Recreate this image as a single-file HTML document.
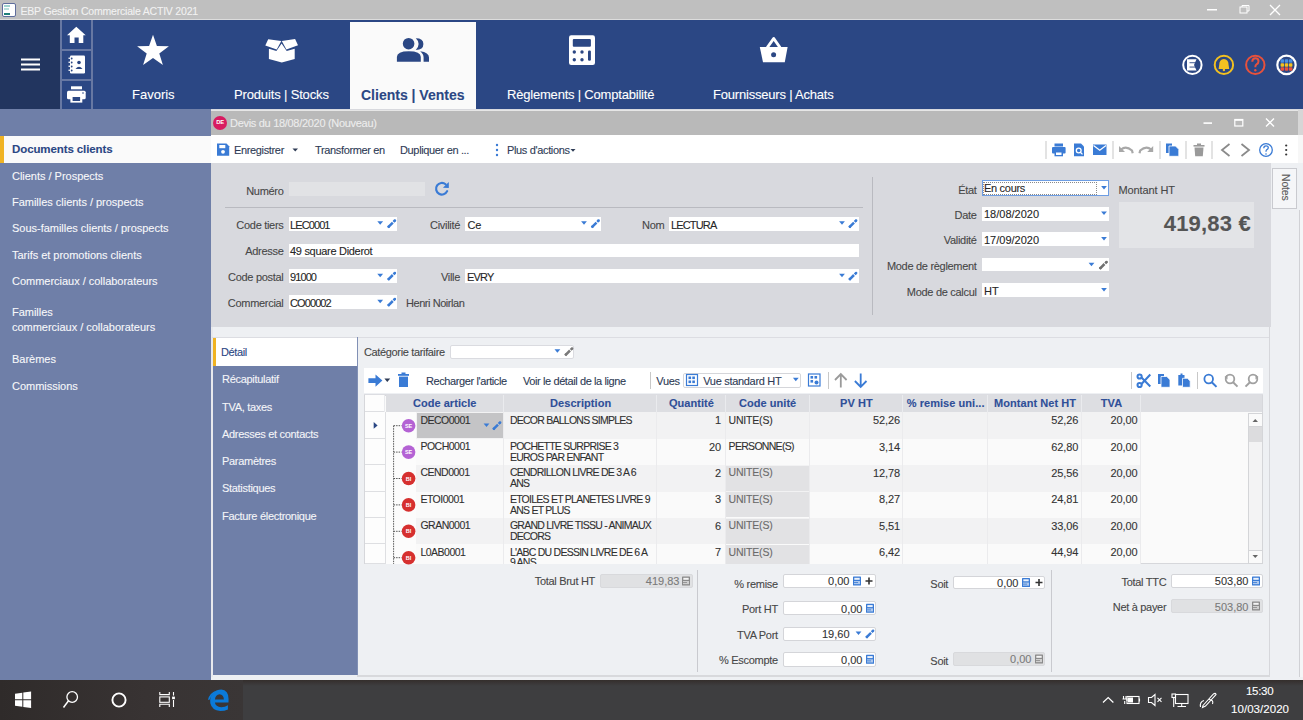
<!DOCTYPE html>
<html><head><meta charset="utf-8">
<style>
*{margin:0;padding:0;box-sizing:border-box}
html,body{width:1303px;height:720px;overflow:hidden;background:#d8d9de;font-family:"Liberation Sans",sans-serif}
.a{position:absolute}
.t{position:absolute;white-space:nowrap;line-height:1;-webkit-text-stroke:0.1px currentColor}
.lbl{position:absolute;white-space:nowrap;line-height:14px;font-size:11px;color:#454545;text-align:right;letter-spacing:-0.25px}
.inp{position:absolute;background:#fff;height:14px}
.inp span{position:absolute;left:2px;top:1px;font-size:11px;line-height:12px;color:#222;white-space:nowrap;letter-spacing:-0.2px}
svg{position:absolute;overflow:visible}
</style></head>
<body>
<!-- window title bar -->
<div class="a" style="left:0;top:0;width:1303px;height:19px;background:#bfbfbf"></div>
<div class="a" style="left:0;top:19px;width:1303px;height:1px;background:#dcdcdc"></div>
<div class="t" style="left:20.5px;top:5.5px;font-size:10.5px;color:#f2f2f2;letter-spacing:-0.2px">EBP Gestion Commerciale ACTIV 2021</div>


<div class="a" style="left:2px;top:3px;width:14px;height:14px;border:1.5px solid #5f6d9c;border-radius:2px;background:#fff"></div>
<div class="a" style="left:4px;top:5px;width:6px;height:2px;background:#9fd3cf"></div>
<div class="a" style="left:4px;top:8px;width:5px;height:2px;background:#b8e0dc"></div>
<div class="a" style="left:4px;top:13px;width:6px;height:2px;background:#1f7f7a"></div>

<!-- nav bar -->
<div class="a" style="left:0;top:20px;width:1303px;height:89px;background:#2b4784"></div>
<div class="a" style="left:0;top:20px;width:60px;height:89px;background:#22355f"></div>
<div class="a" style="left:60px;top:20px;width:2px;height:89px;background:#6778a3"></div>
<div class="a" style="left:91px;top:20px;width:2px;height:89px;background:#6778a3"></div>
<div class="a" style="left:62px;top:49px;width:29px;height:2px;background:#6778a3"></div>
<div class="a" style="left:62px;top:79px;width:29px;height:2px;background:#6778a3"></div>

<!-- active tab -->
<div class="a" style="left:350px;top:22px;width:126px;height:87px;background:#fafafa"></div>
<div class="t" style="left:132px;top:88px;font-size:13px;color:#fff">Favoris</div>
<div class="t" style="left:234px;top:88px;font-size:13px;color:#fff;letter-spacing:-0.15px">Produits | Stocks</div>
<div class="t" style="left:361px;top:88px;font-size:14px;font-weight:bold;color:#2b4784">Clients | Ventes</div>
<div class="t" style="left:507px;top:88px;font-size:13px;color:#fff;letter-spacing:-0.2px">Règlements | Comptabilité</div>
<div class="t" style="left:713px;top:88px;font-size:13px;color:#fff;letter-spacing:-0.2px">Fournisseurs | Achats</div>


<!-- nav icons -->
<svg width="1303" height="720" style="left:0;top:0" viewBox="0 0 1303 720">
<rect x="21" y="58.5" width="19" height="2" fill="#fff"/>
<rect x="21" y="63.5" width="19" height="2" fill="#fff"/>
<rect x="21" y="68.5" width="19" height="2" fill="#fff"/>
<path d="M76.3 26.8 L67 35.3 L69.8 35.3 L69.8 43 L74.5 43 L74.5 37.5 L78.7 37.5 L78.7 43 L83.3 43 L83.3 35.3 L85.7 35.3 Z" fill="#fff"/>
<rect x="70" y="55.5" width="15" height="18" rx="1.2" fill="#fff"/>
<g fill="#2b4784"><circle cx="71.6" cy="58.5" r="1"/><circle cx="71.6" cy="62.5" r="1"/><circle cx="71.6" cy="66.5" r="1"/><circle cx="71.6" cy="70.5" r="1"/>
<circle cx="79" cy="62.5" r="1.8"/><path d="M75.5 69 Q79 64.5 82.5 69 Z"/></g>
<g fill="#fff"><rect x="68.5" y="57.6" width="2.2" height="1.3"/><rect x="68.5" y="61.6" width="2.2" height="1.3"/><rect x="68.5" y="65.6" width="2.2" height="1.3"/><rect x="68.5" y="69.6" width="2.2" height="1.3"/></g>
<rect x="71" y="86.3" width="11" height="3" fill="#fff"/>
<rect x="67" y="90.7" width="18.7" height="8.5" rx="1.5" fill="#fff"/>
<rect x="70.4" y="95" width="11.9" height="7.6" fill="#fff"/>
<rect x="72.6" y="97" width="7.5" height="4" fill="#2b4784"/>
<circle cx="83" cy="93" r="0.8" fill="#2b4784"/>
<path d="M153 34.7 L156.9 46.1 L168.9 46.3 L159.3 53.5 L162.9 65 L153 58.1 L143.1 65 L146.7 53.5 L137.1 46.3 L149.1 46.1 Z" fill="#fff"/>
<path d="M268.2 39.3 L281.3 41.1 L276.7 49.6 L265.3 45.6 Z M281.8 41.1 L295.1 39.1 L298 45.3 L286.4 49.6 Z M268.9 48.7 L276.4 50.9 L281.6 43.6 L286.7 50.9 L294.7 48.7 L294.7 58.9 L281.8 62.4 L268.9 58.9 Z" fill="#fff"/>
<circle cx="408.6" cy="43.7" r="5.8" fill="#2b4784"/>
<path d="M396.9 61.8 L396.9 57 Q397 51.3 408.8 51.3 Q420.7 51.3 420.8 57 L420.8 61.8 Z" fill="#2b4784"/>
<path d="M415.8 38.3 Q423.4 38.3 423.4 44 Q423.4 49.9 415.8 49.9 Q418.6 47.2 418.6 44 Q418.6 40.8 415.8 38.3 Z" fill="#2b4784"/>
<path d="M420.2 51.3 Q429 52.5 429 57.5 L429 61.8 L423.6 61.8 L423.6 57.5 Q423.6 54 420.2 51.3 Z" fill="#2b4784"/>
<rect x="569" y="35.3" width="26" height="29.7" rx="2.2" fill="#fff"/>
<rect x="572.8" y="39" width="18.1" height="7.7" rx="1" fill="#2b4784"/>
<g fill="#2b4784"><circle cx="574.3" cy="52" r="1.7"/><circle cx="582" cy="52" r="1.7"/><circle cx="574.3" cy="59.8" r="1.7"/><circle cx="582" cy="59.8" r="1.7"/><rect x="588" y="50.4" width="2.9" height="10.3" rx="1.2"/></g>
<path d="M759.8 47 L787.6 47 L784.8 62.2 L763 62.2 Z" fill="#fff"/>
<path d="M767.3 47.5 L773.7 38.5 L780 47.5" fill="none" stroke="#fff" stroke-width="3" stroke-linejoin="round"/>
<circle cx="773.6" cy="54.7" r="2.5" fill="#2b4784"/>
<!-- right header icons -->
<circle cx="1192.4" cy="64.9" r="9.2" fill="none" stroke="#fff" stroke-width="2"/>
<path d="M1187 59.2 L1196.5 59.2 L1194 64.9 L1196.5 70.6 L1187 70.6 Z" fill="#fff"/><g fill="#2b4784"><rect x="1189.5" y="62.3" width="6" height="0.9"/><rect x="1189.5" y="66.6" width="6" height="0.9"/></g>
<circle cx="1223.9" cy="64.9" r="9.2" fill="none" stroke="#f3c120" stroke-width="2"/>
<path d="M1223.9 59 Q1219.2 59.5 1219.2 65 L1218.6 69 L1229.2 69 L1228.6 65 Q1228.6 59.5 1223.9 59 Z" fill="#f3c120"/>
<circle cx="1223.9" cy="70" r="1.2" fill="#f3c120"/>
<circle cx="1255.3" cy="64.9" r="9.2" fill="none" stroke="#e8513c" stroke-width="2"/>
<path d="M1252.3 61.8 Q1252.3 58.3 1255.3 58.3 Q1258.5 58.3 1258.5 61.3 Q1258.5 63.3 1256.5 64.3 Q1255.3 65 1255.3 67.3" fill="none" stroke="#e8513c" stroke-width="2"/><circle cx="1255.3" cy="70.2" r="1.2" fill="#e8513c"/>
<circle cx="1286.5" cy="64.9" r="9.2" fill="none" stroke="#fff" stroke-width="2.2"/>
<rect x="1280.6" y="59.3" width="3.4" height="3.4" rx="0.8" fill="#4a90e2"/><rect x="1284.8" y="59.3" width="3.4" height="3.4" rx="0.8" fill="#4a90e2"/><rect x="1289.0" y="59.3" width="3.4" height="3.4" rx="0.8" fill="#4a90e2"/><rect x="1280.6" y="63.3" width="3.4" height="3.4" rx="0.8" fill="#f3c120"/><rect x="1284.8" y="63.3" width="3.4" height="3.4" rx="0.8" fill="#f3c120"/><rect x="1289.0" y="63.3" width="3.4" height="3.4" rx="0.8" fill="#f3c120"/><rect x="1280.6" y="67.3" width="3.4" height="3.4" rx="0.8" fill="#e8513c"/><rect x="1284.8" y="67.3" width="3.4" height="3.4" rx="0.8" fill="#e8513c"/><rect x="1289.0" y="67.3" width="3.4" height="3.4" rx="0.8" fill="#e8513c"/>
<!-- title bar window controls -->
<rect x="1207" y="9" width="10" height="1.5" fill="#fff"/>
<rect x="1240" y="7" width="7" height="6" fill="none" stroke="#fff" stroke-width="1"/>
<path d="M1242 7 L1242 5.5 L1249 5.5 L1249 11 L1247 11" fill="none" stroke="#fff" stroke-width="1"/>
<path d="M1270 5 L1280 15 M1280 5 L1270 15" stroke="#fff" stroke-width="1.3"/>
</svg>

<!-- sidebar -->
<div class="a" style="left:0;top:109px;width:211px;height:571px;background:#6f7fa8"></div>
<div class="a" style="left:0;top:136px;width:211px;height:27px;background:#fafafa"></div>
<div class="a" style="left:0;top:136px;width:4px;height:27px;background:#f0b323"></div>


<div class="t" style="left:12px;top:144px;font-size:11.5px;font-weight:bold;color:#2b4784;letter-spacing:-0.1px">Documents clients</div>
<div style="position:absolute;left:12px;top:1px;font-size:11px;color:#f7f8fa;line-height:1;white-space:nowrap;letter-spacing:-0.02px">
<div class="t" style="top:170px">Clients / Prospects</div>
<div class="t" style="top:196px">Familles clients / prospects</div>
<div class="t" style="top:222px">Sous-familles clients / prospects</div>
<div class="t" style="top:249px">Tarifs et promotions clients</div>
<div class="t" style="top:275px">Commerciaux / collaborateurs</div>
<div class="t" style="top:306px">Familles</div>
<div class="t" style="top:321px">commerciaux / collaborateurs</div>
<div class="t" style="top:353px">Barèmes</div>
<div class="t" style="top:380px">Commissions</div>
</div>

<!-- document window -->
<div class="a" style="left:211px;top:110px;width:1092px;height:570px;background:#eef0f3"></div>
<div class="a" style="left:211px;top:110px;width:1087px;height:25px;background:#b9b9b9"></div>
<div class="a" style="left:211px;top:135px;width:1087px;height:28px;background:#fff"></div>
<div class="a" style="left:211px;top:163px;width:1060px;height:164px;background:#d8d9de"></div>


<!-- doc title -->
<div class="a" style="left:211px;top:110px;width:1087px;height:1px;background:#e6e6e6"></div>
<div class="a" style="left:213px;top:116px;width:14px;height:14px;border-radius:50%;background:#d81b60"></div>
<div class="t" style="left:213px;width:14px;text-align:center;top:120.3px;font-size:5.8px;font-weight:bold;color:#fff;letter-spacing:-0.2px;-webkit-text-stroke:0">DE</div>
<div class="t" style="left:230px;top:117.5px;font-size:11px;color:#ededed;letter-spacing:-0.3px">Devis du 18/08/2020 (Nouveau)</div>
<!-- doc toolbar -->
<div style="position:absolute;left:0;top:0;font-size:11px;color:#2e3b55;line-height:1;white-space:nowrap;letter-spacing:-0.35px">
<div class="t" style="left:234px;top:144.8px">Enregistrer</div>
<div class="t" style="left:315px;top:144.8px">Transformer en</div>
<div class="t" style="left:400px;top:144.8px">Dupliquer en ...</div>
<div class="t" style="left:507px;top:144.8px">Plus d'actions</div>
</div>
<svg width="1303" height="720" style="left:0;top:0" viewBox="0 0 1303 720">
<!-- save icon -->
<path d="M217 143.6 L226.5 143.6 L229.2 146.3 L229.2 155.8 L217 155.8 Z" fill="#3a7bd5"/>
<rect x="219.3" y="145" width="6" height="3.2" fill="#fff"/>
<circle cx="223" cy="151.8" r="1.9" fill="#fff"/>
<path d="M292.5 148.5 L298 148.5 L295.25 151.5 Z" fill="#2e3b55"/>
<g fill="#3a7bd5"><circle cx="497" cy="145" r="1.2"/><circle cx="497" cy="150" r="1.2"/><circle cx="497" cy="155" r="1.2"/></g>
<path d="M570.5 149 L575.5 149 L573 151.8 Z" fill="#2e3b55"/>
<!-- separators -->
<g fill="#c8c8c8"><rect x="1045.5" y="141" width="1" height="18"/><rect x="1112.5" y="141" width="1" height="18"/><rect x="1159.5" y="141" width="1" height="18"/><rect x="1185.5" y="141" width="1" height="18"/><rect x="1211.5" y="141" width="1" height="18"/></g>
<!-- printer -->
<g fill="#3a7bd5"><rect x="1054.5" y="143.5" width="8.5" height="3"/><rect x="1052" y="147" width="13.6" height="6.5" rx="1"/><rect x="1054.5" y="151.5" width="8.5" height="4.8"/></g>
<rect x="1056" y="152.5" width="5.5" height="2.5" fill="#fff"/>
<!-- preview -->
<path d="M1074 143.5 L1081 143.5 L1084 146.5 L1084 156.3 L1074 156.3 Z" fill="#3a7bd5"/>
<circle cx="1078.7" cy="150.5" r="2.4" fill="none" stroke="#fff" stroke-width="1.3"/>
<path d="M1080.4 152.3 L1082.5 154.4" stroke="#fff" stroke-width="1.3"/>
<!-- mail -->
<rect x="1093" y="144.5" width="13.5" height="10.5" fill="#3a7bd5"/>
<path d="M1093.5 145.5 L1099.75 150.3 L1106 145.5" fill="none" stroke="#fff" stroke-width="1.2"/>
<!-- undo redo -->
<path d="M1121 149.5 Q1126 145.3 1132 150.5 L1132.7 153.3" fill="none" stroke="#a8a8a8" stroke-width="2.2"/>
<path d="M1119 146 L1119 152 L1125 152 Z" fill="#a8a8a8"/>
<path d="M1151.2 149.5 Q1146.2 145.3 1140.2 150.5 L1139.5 153.3" fill="none" stroke="#a8a8a8" stroke-width="2.2"/>
<path d="M1153.2 146 L1153.2 152 L1147.2 152 Z" fill="#a8a8a8"/>
<!-- copy doc -->
<path d="M1166 143.5 L1172 143.5 L1172 153 L1166 153 Z" fill="#3a7bd5"/>
<path d="M1169 146 L1175.5 146 L1178.8 149.3 L1178.8 156.3 L1169 156.3 Z" fill="#3a7bd5" stroke="#fff" stroke-width="0.8"/>
<!-- trash -->
<g fill="#9a9a9a"><rect x="1193.5" y="145" width="11" height="1.6"/><rect x="1197" y="143.5" width="4" height="1.5"/><path d="M1194.5 147.5 L1203.5 147.5 L1202.8 156.3 L1195.2 156.3 Z"/></g>
<!-- arrows -->
<path d="M1229.5 144 L1222 150 L1229.5 156" fill="none" stroke="#8a8a8a" stroke-width="1.8"/>
<path d="M1241.5 144 L1249 150 L1241.5 156" fill="none" stroke="#8a8a8a" stroke-width="1.8"/>
<!-- help -->
<circle cx="1266" cy="150" r="6.3" fill="none" stroke="#3a7bd5" stroke-width="1.3"/>
<path d="M1263.8 148.3 Q1263.8 145.8 1266 145.8 Q1268.3 145.8 1268.3 147.8 Q1268.3 149.2 1266.6 149.8 Q1266 150.2 1266 151.8" fill="none" stroke="#3a7bd5" stroke-width="1.3"/>
<circle cx="1266" cy="154" r="0.8" fill="#3a7bd5"/>
<g fill="#333"><circle cx="1286.2" cy="145.5" r="1.1"/><circle cx="1286.2" cy="150" r="1.1"/><circle cx="1286.2" cy="154.5" r="1.1"/></g>
<!-- doc window controls -->
<rect x="1203.5" y="122.3" width="8.5" height="1.6" fill="#fff"/>
<rect x="1234.8" y="119.5" width="8" height="6.5" fill="none" stroke="#fff" stroke-width="1.2"/>
<rect x="1234.8" y="119.5" width="8" height="1.3" fill="#fff"/>
<path d="M1266 118.5 L1274 126.5 M1274 118.5 L1266 126.5" stroke="#fff" stroke-width="1.4"/>
</svg>

<!-- form -->
<div class="t" style="right:1019.5px;top:186.1px;font-size:11px;color:#474747;letter-spacing:-0.3px">Numéro</div>
<div class="a" style="left:288.5px;top:182px;width:136.0px;height:14px;background:#e1e2e5;"></div>
<div class="a" style="left:224.5px;top:207px;width:638.5px;height:1px;background:#b9bac0;"></div>
<div class="t" style="right:1019.5px;top:220.1px;font-size:11px;color:#474747;letter-spacing:-0.3px">Code tiers</div>
<div class="a" style="left:288.5px;top:217px;width:108.69999999999999px;height:14px;background:#fff;"></div>
<div class="t" style="left:290px;top:220.1px;font-size:11px;color:#262626;letter-spacing:-0.9px;font-weight:normal;">LEC0001</div>
<div class="t" style="right:843px;top:220.1px;font-size:11px;color:#474747;letter-spacing:-0.3px">Civilité</div>
<div class="a" style="left:465px;top:217px;width:136px;height:14px;background:#fff;"></div>
<div class="t" style="left:467.5px;top:220.1px;font-size:11px;color:#262626;letter-spacing:-0.3px;font-weight:normal;">Ce</div>
<div class="t" style="right:638.7px;top:220.1px;font-size:11px;color:#474747;letter-spacing:-0.3px">Nom</div>
<div class="a" style="left:669px;top:217px;width:189.5px;height:14px;background:#fff;"></div>
<div class="t" style="left:671px;top:220.1px;font-size:11px;color:#262626;letter-spacing:-0.85px;font-weight:normal;">LECTURA</div>
<div class="t" style="right:1019.5px;top:246.1px;font-size:11px;color:#474747;letter-spacing:-0.3px">Adresse</div>
<div class="a" style="left:288.5px;top:243.5px;width:570.0px;height:13.5px;background:#fff;"></div>
<div class="t" style="left:290px;top:246.1px;font-size:11px;color:#262626;letter-spacing:-0.3px;font-weight:normal;">49 square Diderot</div>
<div class="t" style="right:1019.5px;top:272.1px;font-size:11px;color:#474747;letter-spacing:-0.3px">Code postal</div>
<div class="a" style="left:288.5px;top:269.4px;width:108.69999999999999px;height:13.600000000000023px;background:#fff;"></div>
<div class="t" style="left:290px;top:272.1px;font-size:11px;color:#262626;letter-spacing:-0.9px;font-weight:normal;">91000</div>
<div class="t" style="right:843px;top:272.1px;font-size:11px;color:#474747;letter-spacing:-0.3px">Ville</div>
<div class="a" style="left:465px;top:269.4px;width:393.5px;height:13.600000000000023px;background:#fff;"></div>
<div class="t" style="left:467px;top:272.1px;font-size:11px;color:#262626;letter-spacing:-0.8px;font-weight:normal;">EVRY</div>
<div class="t" style="right:1019.5px;top:298.1px;font-size:11px;color:#474747;letter-spacing:-0.3px">Commercial</div>
<div class="a" style="left:288.5px;top:295px;width:108.69999999999999px;height:13.5px;background:#fff;"></div>
<div class="t" style="left:290px;top:298.1px;font-size:11px;color:#262626;letter-spacing:-0.9px;font-weight:normal;">CO00002</div>
<div class="t" style="left:406px;top:298.1px;font-size:11px;color:#474747;letter-spacing:-0.45px;font-weight:normal;">Henri Noirlan</div>
<div class="a" style="left:872px;top:177px;width:1px;height:138px;background:#b9bac0;"></div>
<div class="t" style="right:326.4px;top:184.6px;font-size:11px;color:#474747;letter-spacing:-0.3px">État</div>
<div class="a" style="left:981.7px;top:180.4px;width:127.70000000000005px;height:15.199999999999989px;background:#fff;border:1px solid #6d9de3"></div>
<div class="a" style="left:983px;top:182px;width:114px;height:13px;background:transparent;border:1px dotted #8a8a8a"></div>
<div class="t" style="left:984px;top:183.3px;font-size:11px;color:#262626;letter-spacing:-0.3px;font-weight:normal;">En cours</div>
<div class="t" style="right:326.4px;top:209.5px;font-size:11px;color:#474747;letter-spacing:-0.3px">Date</div>
<div class="a" style="left:981.7px;top:207px;width:127.70000000000005px;height:13.5px;background:#fff;"></div>
<div class="t" style="left:984px;top:209.3px;font-size:11px;color:#262626;letter-spacing:0px;font-weight:normal;">18/08/2020</div>
<div class="t" style="right:326.4px;top:235.0px;font-size:11px;color:#474747;letter-spacing:-0.3px">Validité</div>
<div class="a" style="left:981.7px;top:232.3px;width:127.70000000000005px;height:13.699999999999989px;background:#fff;"></div>
<div class="t" style="left:984px;top:234.8px;font-size:11px;color:#262626;letter-spacing:0px;font-weight:normal;">17/09/2020</div>
<div class="t" style="right:326.4px;top:260.6px;font-size:11px;color:#474747;letter-spacing:-0.3px">Mode de règlement</div>
<div class="a" style="left:981.7px;top:257.6px;width:127.70000000000005px;height:13.799999999999955px;background:#fff;"></div>
<div class="t" style="right:326.4px;top:286.5px;font-size:11px;color:#474747;letter-spacing:-0.3px">Mode de calcul</div>
<div class="a" style="left:981.7px;top:283.4px;width:127.70000000000005px;height:13.600000000000023px;background:#fff;"></div>
<div class="t" style="left:984px;top:285.8px;font-size:11px;color:#262626;letter-spacing:0px;font-weight:normal;">HT</div>
<div class="t" style="left:1118.4px;top:184.8px;font-size:11px;color:#474747;letter-spacing:-0.1px;font-weight:normal;">Montant HT</div>
<div class="a" style="left:1119px;top:202.4px;width:134.5px;height:45.19999999999999px;background:#e3e4e7;"></div>
<div class="t" style="right:52px;top:213px;font-size:22px;font-weight:bold;color:#555;letter-spacing:0.2px">419,83 €</div>
<div class="a" style="left:1272.4px;top:168.4px;width:24.59999999999991px;height:40.79999999999998px;background:#f5f6f8;border:1px solid #c9cacf"></div>
<div class="t" style="left:1279px;top:174px;font-size:10.5px;color:#5a5a5a;transform-origin:0 0;transform:translate(12px,0) rotate(90deg);letter-spacing:-0.2px">Notes</div>
<svg width="1303" height="720" style="left:0;top:0" viewBox="0 0 1303 720"><path d="M447.16 191.15 A5.8 5.8 0 1 1 445.6 184.26" fill="none" stroke="#3a7bd5" stroke-width="2.2" stroke-linecap="round"/><path d="M448.8 182 L448.8 188.1 L442.9 187.7 Z" fill="#3a7bd5"/><path d="M377.3 221.3 L383.09999999999997 221.3 L380.2 224.7 Z" fill="#3a7bd5"/><path d="M388.00 227.40 L392.80 222.60 M393.50 221.90 L395.00 220.40" stroke="#3a7bd5" stroke-width="2.5" stroke-linecap="butt"/><circle cx="394.90" cy="220.50" r="1.25" fill="#3a7bd5"/><circle cx="388.70" cy="226.70" r="1.25" fill="#3a7bd5"/><path d="M581.1 221.3 L586.9 221.3 L584 224.7 Z" fill="#3a7bd5"/><path d="M591.70 227.40 L596.50 222.60 M597.20 221.90 L598.70 220.40" stroke="#3a7bd5" stroke-width="2.5" stroke-linecap="butt"/><circle cx="598.60" cy="220.50" r="1.25" fill="#3a7bd5"/><circle cx="592.40" cy="226.70" r="1.25" fill="#3a7bd5"/><path d="M839.1 221.3 L844.9 221.3 L842 224.7 Z" fill="#3a7bd5"/><path d="M849.20 227.40 L854.00 222.60 M854.70 221.90 L856.20 220.40" stroke="#3a7bd5" stroke-width="2.5" stroke-linecap="butt"/><circle cx="856.10" cy="220.50" r="1.25" fill="#3a7bd5"/><circle cx="849.90" cy="226.70" r="1.25" fill="#3a7bd5"/><path d="M377.3 273.8 L383.09999999999997 273.8 L380.2 277.2 Z" fill="#3a7bd5"/><path d="M388.00 279.80 L392.80 275.00 M393.50 274.30 L395.00 272.80" stroke="#3a7bd5" stroke-width="2.5" stroke-linecap="butt"/><circle cx="394.90" cy="272.90" r="1.25" fill="#3a7bd5"/><circle cx="388.70" cy="279.10" r="1.25" fill="#3a7bd5"/><path d="M839.1 273.8 L844.9 273.8 L842 277.2 Z" fill="#3a7bd5"/><path d="M849.20 279.80 L854.00 275.00 M854.70 274.30 L856.20 272.80" stroke="#3a7bd5" stroke-width="2.5" stroke-linecap="butt"/><circle cx="856.10" cy="272.90" r="1.25" fill="#3a7bd5"/><circle cx="849.90" cy="279.10" r="1.25" fill="#3a7bd5"/><path d="M377.3 299.8 L383.09999999999997 299.8 L380.2 303.2 Z" fill="#3a7bd5"/><path d="M388.00 305.80 L392.80 301.00 M393.50 300.30 L395.00 298.80" stroke="#3a7bd5" stroke-width="2.5" stroke-linecap="butt"/><circle cx="394.90" cy="298.90" r="1.25" fill="#3a7bd5"/><circle cx="388.70" cy="305.10" r="1.25" fill="#3a7bd5"/><path d="M1101.1 186.10000000000002 L1106.9 186.10000000000002 L1104 189.5 Z" fill="#3a7bd5"/><path d="M1101.1 211.60000000000002 L1106.9 211.60000000000002 L1104 215.0 Z" fill="#3a7bd5"/><path d="M1101.1 237.10000000000002 L1106.9 237.10000000000002 L1104 240.5 Z" fill="#3a7bd5"/><path d="M1088.6 262.8 L1094.4 262.8 L1091.5 266.2 Z" fill="#3a7bd5"/><path d="M1099.70 268.80 L1104.50 264.00 M1105.20 263.30 L1106.70 261.80" stroke="#707070" stroke-width="2.5" stroke-linecap="butt"/><circle cx="1106.60" cy="261.90" r="1.25" fill="#707070"/><circle cx="1100.40" cy="268.10" r="1.25" fill="#707070"/><path d="M1101.1 288.1 L1106.9 288.1 L1104 291.5 Z" fill="#3a7bd5"/></svg>
<!-- tabs column -->
<div class="a" style="left:211px;top:327px;width:2px;height:350px;background:#e8e9ed"></div>
<div class="a" style="left:213px;top:337px;width:143.5px;height:338px;background:#6f7fa8"></div>
<div class="a" style="left:213px;top:337px;width:143.5px;height:29px;background:#fff"></div>
<div class="a" style="left:213px;top:337px;width:3px;height:29px;background:#f0b323"></div>

<!-- grid -->
<div class="a" style="left:364px;top:368px;width:899px;height:25px;background:#fff"></div>
<div class="a" style="left:364px;top:394px;width:899px;height:170px;background:#fafafa"></div>
<div class="a" style="left:364px;top:394px;width:899px;height:18px;background:#dcdde2"></div>

<div class="a" style="left:1298px;top:110px;width:5px;height:25px;background:#d6d6d6"></div>
<div class="a" style="left:1298px;top:135px;width:5px;height:28px;background:#f7f7f7"></div>
<div class="a" style="left:1298.5px;top:210px;width:1px;height:467px;background:#d0d1d5"></div>
<div class="a" style="left:1299.5px;top:210px;width:3.5px;height:467px;background:#f4f5f7"></div>
<!-- detail -->
<div class="a" style="left:212px;top:336.5px;width:1057px;height:1.0px;background:#dcdde2;"></div>
<div class="a" style="left:356.5px;top:337px;width:1.0px;height:338px;background:#8190b5;"></div>
<div class="t" style="left:221px;top:347.4px;font-size:11px;color:#2b4784;letter-spacing:-0.4px;font-weight:normal;">Détail</div>
<div class="t" style="left:222px;top:374.4px;font-size:11px;color:#f4f5f8;letter-spacing:-0.3px;font-weight:normal;">Récapitulatif</div>
<div class="t" style="left:222px;top:401.9px;font-size:11px;color:#f4f5f8;letter-spacing:-0.3px;font-weight:normal;">TVA, taxes</div>
<div class="t" style="left:222px;top:429.4px;font-size:11px;color:#f4f5f8;letter-spacing:-0.3px;font-weight:normal;">Adresses et contacts</div>
<div class="t" style="left:222px;top:456.4px;font-size:11px;color:#f4f5f8;letter-spacing:-0.3px;font-weight:normal;">Paramètres</div>
<div class="t" style="left:222px;top:483.4px;font-size:11px;color:#f4f5f8;letter-spacing:-0.3px;font-weight:normal;">Statistiques</div>
<div class="t" style="left:222px;top:510.9px;font-size:11px;color:#f4f5f8;letter-spacing:-0.3px;font-weight:normal;">Facture électronique</div>
<div class="t" style="left:364px;top:347.4px;font-size:11px;color:#474747;letter-spacing:-0.35px;font-weight:normal;">Catégorie tarifaire</div>
<div class="a" style="left:450px;top:344.7px;width:124px;height:14.300000000000011px;background:#fff;border:1px solid #dadbe0;border-radius:2px"></div>
<div class="a" style="left:364px;top:368px;width:899px;height:25.30000000000001px;background:#fff;"></div>
<div class="t" style="left:426px;top:375.9px;font-size:11px;color:#2e3b55;letter-spacing:-0.4px;font-weight:normal;">Recharger l'article</div>
<div class="t" style="left:523px;top:375.9px;font-size:11px;color:#2e3b55;letter-spacing:-0.4px;font-weight:normal;">Voir le détail de la ligne</div>
<div class="a" style="left:650px;top:372px;width:1px;height:17px;background:#c8c8c8;"></div>
<div class="t" style="left:656.3px;top:375.9px;font-size:11px;color:#2e3b55;letter-spacing:-0.3px;font-weight:normal;">Vues</div>
<div class="a" style="left:683.4px;top:372.5px;width:118.10000000000002px;height:15.100000000000023px;background:#fff;border:1px solid #d5d6da;border-radius:2px"></div>
<div class="t" style="left:703.2px;top:375.9px;font-size:11px;color:#2e3b55;letter-spacing:-0.3px;font-weight:normal;">Vue standard HT</div>
<div class="a" style="left:827.5px;top:372px;width:1.0px;height:17px;background:#c8c8c8;"></div>
<div class="a" style="left:1130.5px;top:372px;width:1.0px;height:17px;background:#c8c8c8;"></div>
<div class="a" style="left:1197px;top:372px;width:1px;height:17px;background:#c8c8c8;"></div>
<div class="a" style="left:364px;top:394.8px;width:899px;height:169.7px;background:#fafafa;border:1px solid #d6d7db"></div>
<div class="a" style="left:386.4px;top:395px;width:875.6px;height:17.399999999999977px;background:#dddee2;"></div>
<div class="a" style="left:365px;top:395px;width:20.399999999999977px;height:17.399999999999977px;background:#fdfdfd;"></div>
<div class="a" style="left:365px;top:411.4px;width:20.399999999999977px;height:1.0px;background:#dedfe2;"></div>
<div class="a" style="left:384.4px;top:395px;width:1.0px;height:17.399999999999977px;background:#eaebee;"></div>
<div class="a" style="left:503px;top:395px;width:1px;height:17.399999999999977px;background:#eaebee;"></div>
<div class="t" style="left:385.4px;width:118.60000000000002px;top:398.0px;text-align:center;font-size:11px;font-weight:bold;color:#2f4f98;letter-spacing:0.05px">Code article</div>
<div class="a" style="left:656.3px;top:395px;width:1.0px;height:17.399999999999977px;background:#eaebee;"></div>
<div class="t" style="left:504px;width:153.29999999999995px;top:398.0px;text-align:center;font-size:11px;font-weight:bold;color:#2f4f98;letter-spacing:0.05px">Description</div>
<div class="a" style="left:724.7px;top:395px;width:1.0px;height:17.399999999999977px;background:#eaebee;"></div>
<div class="t" style="left:657.3px;width:68.40000000000009px;top:398.0px;text-align:center;font-size:11px;font-weight:bold;color:#2f4f98;letter-spacing:0.05px">Quantité</div>
<div class="a" style="left:808.6px;top:395px;width:1.0px;height:17.399999999999977px;background:#eaebee;"></div>
<div class="t" style="left:725.7px;width:83.89999999999998px;top:398.0px;text-align:center;font-size:11px;font-weight:bold;color:#2f4f98;letter-spacing:0.05px">Code unité</div>
<div class="a" style="left:902.3px;top:395px;width:1.0px;height:17.399999999999977px;background:#eaebee;"></div>
<div class="t" style="left:809.6px;width:93.69999999999993px;top:398.0px;text-align:center;font-size:11px;font-weight:bold;color:#2f4f98;letter-spacing:0.05px">PV HT</div>
<div class="a" style="left:987px;top:395px;width:1px;height:17.399999999999977px;background:#eaebee;"></div>
<div class="t" style="left:903.3px;width:84.70000000000005px;top:398.0px;text-align:center;font-size:11px;font-weight:bold;color:#2f4f98;letter-spacing:0.05px">% remise uni...</div>
<div class="a" style="left:1081px;top:395px;width:1px;height:17.399999999999977px;background:#eaebee;"></div>
<div class="t" style="left:988px;width:94px;top:398.0px;text-align:center;font-size:11px;font-weight:bold;color:#2f4f98;letter-spacing:0.05px">Montant Net HT</div>
<div class="a" style="left:1140px;top:395px;width:1px;height:17.399999999999977px;background:#eaebee;"></div>
<div class="t" style="left:1082px;width:59px;top:398.0px;text-align:center;font-size:11px;font-weight:bold;color:#2f4f98;letter-spacing:0.05px">TVA</div>
<div class="a" style="left:0;top:0;width:1303px;height:564.4px;overflow:hidden"><div class="a" style="left:386.4px;top:412.4px;width:30.0px;height:26.399999999999977px;background:#fcfcfc;"></div>
<div class="a" style="left:416.4px;top:412.4px;width:724.6px;height:26.399999999999977px;background:#f2f2f3;"></div>
<div class="a" style="left:365px;top:412.4px;width:20.399999999999977px;height:26.399999999999977px;background:#fdfdfd;"></div>
<div class="a" style="left:365px;top:437.79999999999995px;width:20.399999999999977px;height:1.0px;background:#dedfe2;"></div>
<div class="a" style="left:385.4px;top:412.4px;width:1.0px;height:26.399999999999977px;background:#dedfe2;"></div>
<div class="a" style="left:503px;top:412.4px;width:1px;height:26.399999999999977px;background:#ebebed;"></div>
<div class="a" style="left:656.3px;top:412.4px;width:1.0px;height:26.399999999999977px;background:#ebebed;"></div>
<div class="a" style="left:724.7px;top:412.4px;width:1.0px;height:26.399999999999977px;background:#ebebed;"></div>
<div class="a" style="left:808.6px;top:412.4px;width:1.0px;height:26.399999999999977px;background:#ebebed;"></div>
<div class="a" style="left:902.3px;top:412.4px;width:1.0px;height:26.399999999999977px;background:#ebebed;"></div>
<div class="a" style="left:987px;top:412.4px;width:1px;height:26.399999999999977px;background:#ebebed;"></div>
<div class="a" style="left:1081px;top:412.4px;width:1px;height:26.399999999999977px;background:#ebebed;"></div>
<div class="a" style="left:1140px;top:412.4px;width:1px;height:26.399999999999977px;background:#ebebed;"></div>
<div class="a" style="left:417.4px;top:413.3px;width:85.60000000000002px;height:24.5px;background:#c4c4c6;"></div>
<div class="t" style="left:420.4px;top:414.6px;font-size:10.5px;color:#303030;letter-spacing:-0.5px;font-weight:normal;">DECO0001</div>
<div class="t" style="left:509.9px;top:414.6px;font-size:10.5px;color:#303030;letter-spacing:-0.75px;font-weight:normal;">DECOR BALLONS SIMPLES</div>
<div class="t" style="right:582px;top:415.1px;font-size:11px;color:#333;letter-spacing:-0.1px">1</div>
<div class="t" style="left:728.6px;top:414.6px;font-size:10.5px;color:#303030;letter-spacing:-0.2px;font-weight:normal;">UNITE(S)</div>
<div class="t" style="right:403px;top:415.1px;font-size:11px;color:#333;letter-spacing:-0.1px">52,26</div>
<div class="t" style="right:224.70000000000005px;top:415.1px;font-size:11px;color:#333;letter-spacing:-0.1px">52,26</div>
<div class="t" style="right:165.5px;top:415.1px;font-size:11px;color:#333;letter-spacing:-0.1px">20,00</div>
<div class="a" style="left:386.4px;top:438.79999999999995px;width:30.0px;height:26.399999999999977px;background:#fcfcfc;"></div>
<div class="a" style="left:416.4px;top:438.79999999999995px;width:724.6px;height:26.399999999999977px;background:#fafafa;"></div>
<div class="a" style="left:365px;top:438.79999999999995px;width:20.399999999999977px;height:26.399999999999977px;background:#fdfdfd;"></div>
<div class="a" style="left:365px;top:464.19999999999993px;width:20.399999999999977px;height:1.0px;background:#dedfe2;"></div>
<div class="a" style="left:385.4px;top:438.79999999999995px;width:1.0px;height:26.399999999999977px;background:#dedfe2;"></div>
<div class="a" style="left:503px;top:438.79999999999995px;width:1px;height:26.399999999999977px;background:#ebebed;"></div>
<div class="a" style="left:656.3px;top:438.79999999999995px;width:1.0px;height:26.399999999999977px;background:#ebebed;"></div>
<div class="a" style="left:724.7px;top:438.79999999999995px;width:1.0px;height:26.399999999999977px;background:#ebebed;"></div>
<div class="a" style="left:808.6px;top:438.79999999999995px;width:1.0px;height:26.399999999999977px;background:#ebebed;"></div>
<div class="a" style="left:902.3px;top:438.79999999999995px;width:1.0px;height:26.399999999999977px;background:#ebebed;"></div>
<div class="a" style="left:987px;top:438.79999999999995px;width:1px;height:26.399999999999977px;background:#ebebed;"></div>
<div class="a" style="left:1081px;top:438.79999999999995px;width:1px;height:26.399999999999977px;background:#ebebed;"></div>
<div class="a" style="left:1140px;top:438.79999999999995px;width:1px;height:26.399999999999977px;background:#ebebed;"></div>
<div class="t" style="left:420.4px;top:441.0px;font-size:10.5px;color:#303030;letter-spacing:-0.5px;font-weight:normal;">POCH0001</div>
<div class="t" style="left:509.9px;top:441.0px;font-size:10.5px;color:#303030;letter-spacing:-0.75px;font-weight:normal;">POCHETTE SURPRISE 3</div>
<div class="t" style="left:509.9px;top:451.8px;font-size:10.5px;color:#303030;letter-spacing:-0.75px;font-weight:normal;">EUROS PAR ENFANT</div>
<div class="t" style="right:582px;top:441.5px;font-size:11px;color:#333;letter-spacing:-0.1px">20</div>
<div class="t" style="left:728.6px;top:441.0px;font-size:10.5px;color:#303030;letter-spacing:-0.7px;font-weight:normal;">PERSONNE(S)</div>
<div class="t" style="right:403px;top:441.5px;font-size:11px;color:#333;letter-spacing:-0.1px">3,14</div>
<div class="t" style="right:224.70000000000005px;top:441.5px;font-size:11px;color:#333;letter-spacing:-0.1px">62,80</div>
<div class="t" style="right:165.5px;top:441.5px;font-size:11px;color:#333;letter-spacing:-0.1px">20,00</div>
<div class="a" style="left:386.4px;top:465.2px;width:30.0px;height:26.399999999999977px;background:#fcfcfc;"></div>
<div class="a" style="left:416.4px;top:465.2px;width:724.6px;height:26.399999999999977px;background:#f2f2f3;"></div>
<div class="a" style="left:365px;top:465.2px;width:20.399999999999977px;height:26.399999999999977px;background:#fdfdfd;"></div>
<div class="a" style="left:365px;top:490.59999999999997px;width:20.399999999999977px;height:1.0px;background:#dedfe2;"></div>
<div class="a" style="left:385.4px;top:465.2px;width:1.0px;height:26.399999999999977px;background:#dedfe2;"></div>
<div class="a" style="left:503px;top:465.2px;width:1px;height:26.399999999999977px;background:#ebebed;"></div>
<div class="a" style="left:656.3px;top:465.2px;width:1.0px;height:26.399999999999977px;background:#ebebed;"></div>
<div class="a" style="left:724.7px;top:465.2px;width:1.0px;height:26.399999999999977px;background:#ebebed;"></div>
<div class="a" style="left:808.6px;top:465.2px;width:1.0px;height:26.399999999999977px;background:#ebebed;"></div>
<div class="a" style="left:902.3px;top:465.2px;width:1.0px;height:26.399999999999977px;background:#ebebed;"></div>
<div class="a" style="left:987px;top:465.2px;width:1px;height:26.399999999999977px;background:#ebebed;"></div>
<div class="a" style="left:1081px;top:465.2px;width:1px;height:26.399999999999977px;background:#ebebed;"></div>
<div class="a" style="left:1140px;top:465.2px;width:1px;height:26.399999999999977px;background:#ebebed;"></div>
<div class="a" style="left:725.7px;top:465.7px;width:83.29999999999995px;height:25.399999999999977px;background:#e2e2e4;"></div>
<div class="t" style="left:420.4px;top:467.4px;font-size:10.5px;color:#303030;letter-spacing:-0.5px;font-weight:normal;">CEND0001</div>
<div class="t" style="left:509.9px;top:467.4px;font-size:10.5px;color:#303030;letter-spacing:-0.75px;font-weight:normal;">CENDRILLON LIVRE DE 3 A 6</div>
<div class="t" style="left:509.9px;top:478.2px;font-size:10.5px;color:#303030;letter-spacing:-0.75px;font-weight:normal;">ANS</div>
<div class="t" style="right:582px;top:467.9px;font-size:11px;color:#333;letter-spacing:-0.1px">2</div>
<div class="t" style="left:728.6px;top:467.4px;font-size:10.5px;color:#6a6a6a;letter-spacing:-0.2px;font-weight:normal;">UNITE(S)</div>
<div class="t" style="right:403px;top:467.9px;font-size:11px;color:#333;letter-spacing:-0.1px">12,78</div>
<div class="t" style="right:224.70000000000005px;top:467.9px;font-size:11px;color:#333;letter-spacing:-0.1px">25,56</div>
<div class="t" style="right:165.5px;top:467.9px;font-size:11px;color:#333;letter-spacing:-0.1px">20,00</div>
<div class="a" style="left:386.4px;top:491.59999999999997px;width:30.0px;height:26.400000000000034px;background:#fcfcfc;"></div>
<div class="a" style="left:416.4px;top:491.59999999999997px;width:724.6px;height:26.400000000000034px;background:#fafafa;"></div>
<div class="a" style="left:365px;top:491.59999999999997px;width:20.399999999999977px;height:26.400000000000034px;background:#fdfdfd;"></div>
<div class="a" style="left:365px;top:517.0px;width:20.399999999999977px;height:1.0px;background:#dedfe2;"></div>
<div class="a" style="left:385.4px;top:491.59999999999997px;width:1.0px;height:26.400000000000034px;background:#dedfe2;"></div>
<div class="a" style="left:503px;top:491.59999999999997px;width:1px;height:26.400000000000034px;background:#ebebed;"></div>
<div class="a" style="left:656.3px;top:491.59999999999997px;width:1.0px;height:26.400000000000034px;background:#ebebed;"></div>
<div class="a" style="left:724.7px;top:491.59999999999997px;width:1.0px;height:26.400000000000034px;background:#ebebed;"></div>
<div class="a" style="left:808.6px;top:491.59999999999997px;width:1.0px;height:26.400000000000034px;background:#ebebed;"></div>
<div class="a" style="left:902.3px;top:491.59999999999997px;width:1.0px;height:26.400000000000034px;background:#ebebed;"></div>
<div class="a" style="left:987px;top:491.59999999999997px;width:1px;height:26.400000000000034px;background:#ebebed;"></div>
<div class="a" style="left:1081px;top:491.59999999999997px;width:1px;height:26.400000000000034px;background:#ebebed;"></div>
<div class="a" style="left:1140px;top:491.59999999999997px;width:1px;height:26.400000000000034px;background:#ebebed;"></div>
<div class="a" style="left:725.7px;top:492.09999999999997px;width:83.29999999999995px;height:25.400000000000034px;background:#e2e2e4;"></div>
<div class="t" style="left:420.4px;top:493.8px;font-size:10.5px;color:#303030;letter-spacing:-0.5px;font-weight:normal;">ETOI0001</div>
<div class="t" style="left:509.9px;top:493.8px;font-size:10.5px;color:#303030;letter-spacing:-0.75px;font-weight:normal;">ETOILES ET PLANETES LIVRE 9</div>
<div class="t" style="left:509.9px;top:504.6px;font-size:10.5px;color:#303030;letter-spacing:-0.75px;font-weight:normal;">ANS ET PLUS</div>
<div class="t" style="right:582px;top:494.3px;font-size:11px;color:#333;letter-spacing:-0.1px">3</div>
<div class="t" style="left:728.6px;top:493.8px;font-size:10.5px;color:#6a6a6a;letter-spacing:-0.2px;font-weight:normal;">UNITE(S)</div>
<div class="t" style="right:403px;top:494.3px;font-size:11px;color:#333;letter-spacing:-0.1px">8,27</div>
<div class="t" style="right:224.70000000000005px;top:494.3px;font-size:11px;color:#333;letter-spacing:-0.1px">24,81</div>
<div class="t" style="right:165.5px;top:494.3px;font-size:11px;color:#333;letter-spacing:-0.1px">20,00</div>
<div class="a" style="left:386.4px;top:518.0px;width:30.0px;height:26.399999999999977px;background:#fcfcfc;"></div>
<div class="a" style="left:416.4px;top:518.0px;width:724.6px;height:26.399999999999977px;background:#f2f2f3;"></div>
<div class="a" style="left:365px;top:518.0px;width:20.399999999999977px;height:26.399999999999977px;background:#fdfdfd;"></div>
<div class="a" style="left:365px;top:543.4px;width:20.399999999999977px;height:1.0px;background:#dedfe2;"></div>
<div class="a" style="left:385.4px;top:518.0px;width:1.0px;height:26.399999999999977px;background:#dedfe2;"></div>
<div class="a" style="left:503px;top:518.0px;width:1px;height:26.399999999999977px;background:#ebebed;"></div>
<div class="a" style="left:656.3px;top:518.0px;width:1.0px;height:26.399999999999977px;background:#ebebed;"></div>
<div class="a" style="left:724.7px;top:518.0px;width:1.0px;height:26.399999999999977px;background:#ebebed;"></div>
<div class="a" style="left:808.6px;top:518.0px;width:1.0px;height:26.399999999999977px;background:#ebebed;"></div>
<div class="a" style="left:902.3px;top:518.0px;width:1.0px;height:26.399999999999977px;background:#ebebed;"></div>
<div class="a" style="left:987px;top:518.0px;width:1px;height:26.399999999999977px;background:#ebebed;"></div>
<div class="a" style="left:1081px;top:518.0px;width:1px;height:26.399999999999977px;background:#ebebed;"></div>
<div class="a" style="left:1140px;top:518.0px;width:1px;height:26.399999999999977px;background:#ebebed;"></div>
<div class="a" style="left:725.7px;top:518.5px;width:83.29999999999995px;height:25.399999999999977px;background:#e2e2e4;"></div>
<div class="t" style="left:420.4px;top:520.2px;font-size:10.5px;color:#303030;letter-spacing:-0.5px;font-weight:normal;">GRAN0001</div>
<div class="t" style="left:509.9px;top:520.2px;font-size:10.5px;color:#303030;letter-spacing:-0.75px;font-weight:normal;">GRAND LIVRE TISSU - ANIMAUX</div>
<div class="t" style="left:509.9px;top:531.0px;font-size:10.5px;color:#303030;letter-spacing:-0.75px;font-weight:normal;">DECORS</div>
<div class="t" style="right:582px;top:520.7px;font-size:11px;color:#333;letter-spacing:-0.1px">6</div>
<div class="t" style="left:728.6px;top:520.2px;font-size:10.5px;color:#6a6a6a;letter-spacing:-0.2px;font-weight:normal;">UNITE(S)</div>
<div class="t" style="right:403px;top:520.7px;font-size:11px;color:#333;letter-spacing:-0.1px">5,51</div>
<div class="t" style="right:224.70000000000005px;top:520.7px;font-size:11px;color:#333;letter-spacing:-0.1px">33,06</div>
<div class="t" style="right:165.5px;top:520.7px;font-size:11px;color:#333;letter-spacing:-0.1px">20,00</div>
<div class="a" style="left:386.4px;top:544.4px;width:30.0px;height:20.0px;background:#fcfcfc;"></div>
<div class="a" style="left:416.4px;top:544.4px;width:724.6px;height:20.0px;background:#fafafa;"></div>
<div class="a" style="left:365px;top:544.4px;width:20.399999999999977px;height:20.0px;background:#fdfdfd;"></div>
<div class="a" style="left:365px;top:563.4px;width:20.399999999999977px;height:1.0px;background:#dedfe2;"></div>
<div class="a" style="left:385.4px;top:544.4px;width:1.0px;height:20.0px;background:#dedfe2;"></div>
<div class="a" style="left:503px;top:544.4px;width:1px;height:20.0px;background:#ebebed;"></div>
<div class="a" style="left:656.3px;top:544.4px;width:1.0px;height:20.0px;background:#ebebed;"></div>
<div class="a" style="left:724.7px;top:544.4px;width:1.0px;height:20.0px;background:#ebebed;"></div>
<div class="a" style="left:808.6px;top:544.4px;width:1.0px;height:20.0px;background:#ebebed;"></div>
<div class="a" style="left:902.3px;top:544.4px;width:1.0px;height:20.0px;background:#ebebed;"></div>
<div class="a" style="left:987px;top:544.4px;width:1px;height:20.0px;background:#ebebed;"></div>
<div class="a" style="left:1081px;top:544.4px;width:1px;height:20.0px;background:#ebebed;"></div>
<div class="a" style="left:1140px;top:544.4px;width:1px;height:20.0px;background:#ebebed;"></div>
<div class="a" style="left:725.7px;top:544.9px;width:83.29999999999995px;height:19.0px;background:#e2e2e4;"></div>
<div class="t" style="left:420.4px;top:546.6px;font-size:10.5px;color:#303030;letter-spacing:-0.5px;font-weight:normal;">L0AB0001</div>
<div class="t" style="left:509.9px;top:546.6px;font-size:10.5px;color:#303030;letter-spacing:-0.75px;font-weight:normal;">L'ABC DU DESSIN LIVRE DE 6 A</div>
<div class="t" style="left:509.9px;top:557.4px;font-size:10.5px;color:#303030;letter-spacing:-0.75px;font-weight:normal;">9 ANS</div>
<div class="t" style="right:582px;top:547.1px;font-size:11px;color:#333;letter-spacing:-0.1px">7</div>
<div class="t" style="left:728.6px;top:546.6px;font-size:10.5px;color:#6a6a6a;letter-spacing:-0.2px;font-weight:normal;">UNITE(S)</div>
<div class="t" style="right:403px;top:547.1px;font-size:11px;color:#333;letter-spacing:-0.1px">6,42</div>
<div class="t" style="right:224.70000000000005px;top:547.1px;font-size:11px;color:#333;letter-spacing:-0.1px">44,94</div>
<div class="t" style="right:165.5px;top:547.1px;font-size:11px;color:#333;letter-spacing:-0.1px">20,00</div>
</div>
<div class="a" style="left:1248px;top:413px;width:14.5px;height:150.5px;background:#f3f3f4;border:1px solid #d4d5d8"></div>
<div class="a" style="left:1248px;top:413px;width:14.5px;height:14px;background:#fafafa;border:1px solid #d4d5d8"></div>
<div class="a" style="left:1249px;top:427px;width:12.5px;height:15px;background:#dcdcde;"></div>
<div class="a" style="left:1248px;top:549.5px;width:14.5px;height:14.0px;background:#fafafa;border:1px solid #d4d5d8"></div>
<div class="a" style="left:1269px;top:327px;width:1px;height:348px;background:#d6d7db;"></div>
<svg width="1303" height="720" style="left:0;top:0" viewBox="0 0 1303 720"><path d="M554.5 349.3 L560.3 349.3 L557.4 352.7 Z" fill="#3a7bd5"/><path d="M565.20 355.30 L570.00 350.50 M570.70 349.80 L572.20 348.30" stroke="#7a7a7a" stroke-width="2.5" stroke-linecap="butt"/><circle cx="572.10" cy="348.40" r="1.25" fill="#7a7a7a"/><circle cx="565.90" cy="354.60" r="1.25" fill="#7a7a7a"/><path d="M368.4 378.2 L375.5 378.2 L375.5 374.5 L382.4 380.6 L375.5 386.7 L375.5 383 L368.4 383 Z" fill="#3a7bd5"/><path d="M384.40000000000003 378.6 L390.2 378.6 L387.3 382.0 Z" fill="#2e3b55"/><g fill="#3a7bd5"><rect x="398" y="374" width="11" height="1.8"/><rect x="401.5" y="372.5" width="4" height="1.5"/><path d="M399 376.6 L408 376.6 L408 387 L399 387 Z"/></g><rect x="686.5" y="374.5" width="11" height="11" fill="none" stroke="#3a7bd5" stroke-width="1.2"/><g fill="#3a7bd5"><rect x="688.5" y="376.5" width="2.6" height="2.6"/><rect x="692.3" y="376.5" width="2.6" height="2.6"/><rect x="688.5" y="380.5" width="2.6" height="2.6"/><rect x="692.3" y="380.5" width="2.6" height="2.6"/></g><path d="M792.9 377.8 L798.6999999999999 377.8 L795.8 381.2 Z" fill="#3a7bd5"/><rect x="808.5" y="374" width="11.5" height="12" fill="none" stroke="#3a7bd5" stroke-width="1.2"/><g fill="#3a7bd5"><rect x="810.5" y="376" width="2.6" height="2.6"/><rect x="814.5" y="376" width="2.6" height="2.6"/><rect x="810.5" y="380" width="2.6" height="2.6"/><circle cx="816.5" cy="382.5" r="2"/></g><path d="M840.8 387.5 L840.8 374.5 M835 380 L840.8 374 L846.6 380" fill="none" stroke="#9a9a9a" stroke-width="1.8"/><path d="M860.7 373.5 L860.7 386.5 M854.9 381 L860.7 387 L866.5 381" fill="none" stroke="#3a7bd5" stroke-width="1.8"/><g stroke="#3a7bd5" stroke-width="2" fill="none"><circle cx="1139.6" cy="376.5" r="2.1"/><circle cx="1139.6" cy="385" r="2.1"/><path d="M1141.5 377.5 L1150.3 386.5 M1141.5 384 L1150.3 374.5"/></g><g fill="#3a7bd5"><path d="M1158 374 L1164 374 L1164 384 L1158 384 Z"/><path d="M1161 376.5 L1166.8 376.5 L1170 379.7 L1170 387.3 L1161 387.3 Z" stroke="#fff" stroke-width="0.8"/></g><g fill="#3a7bd5"><path d="M1178.3 375 L1184.5 375 L1184.5 385.5 L1178.3 385.5 Z"/><path d="M1180.5 373.5 L1182.5 373.5 L1182.5 375.5 L1180.5 375.5 Z"/><path d="M1182.5 378.3 L1187.5 378.3 L1190.2 381 L1190.2 387.3 L1182.5 387.3 Z" stroke="#fff" stroke-width="0.8"/></g><circle cx="1208.7" cy="379" r="4.3" fill="none" stroke="#3a7bd5" stroke-width="1.8"/><path d="M1211.8 382.2 L1216.5 386.9" stroke="#3a7bd5" stroke-width="2"/><circle cx="1230" cy="379" r="4.3" fill="none" stroke="#a0a0a0" stroke-width="1.8"/><path d="M1233.1 382.2 L1237.5 386.6" stroke="#a0a0a0" stroke-width="2"/><path d="M1224.5 377 L1227.5 374.5 L1227.5 379.5 Z" fill="#a0a0a0"/><circle cx="1253" cy="379" r="4.3" fill="none" stroke="#a0a0a0" stroke-width="1.8"/><path d="M1249.9 382.2 L1245.5 386.6" stroke="#a0a0a0" stroke-width="2"/><path d="M1258.5 377 L1255.5 374.5 L1255.5 379.5 Z" fill="#a0a0a0"/><circle cx="408.6" cy="425.7" r="6.8" fill="#b462d4"/><path d="M393.6 425.7 L401.5 425.7" stroke="#555" stroke-width="1" stroke-dasharray="1.5 1"/><text x="408.6" y="427.7" font-size="5.5" font-weight="bold" fill="#fff" text-anchor="middle" font-family="Liberation Sans">SE</text><circle cx="408.6" cy="452.1" r="6.8" fill="#b462d4"/><path d="M393.6 452.1 L401.5 452.1" stroke="#555" stroke-width="1" stroke-dasharray="1.5 1"/><text x="408.6" y="454.1" font-size="5.5" font-weight="bold" fill="#fff" text-anchor="middle" font-family="Liberation Sans">SE</text><circle cx="408.6" cy="478.5" r="6.8" fill="#d6302f"/><path d="M393.6 478.5 L401.5 478.5" stroke="#555" stroke-width="1" stroke-dasharray="1.5 1"/><text x="408.6" y="480.5" font-size="5.5" font-weight="bold" fill="#fff" text-anchor="middle" font-family="Liberation Sans">BI</text><circle cx="408.6" cy="504.9" r="6.8" fill="#d6302f"/><path d="M393.6 504.9 L401.5 504.9" stroke="#555" stroke-width="1" stroke-dasharray="1.5 1"/><text x="408.6" y="506.9" font-size="5.5" font-weight="bold" fill="#fff" text-anchor="middle" font-family="Liberation Sans">BI</text><circle cx="408.6" cy="531.3" r="6.8" fill="#d6302f"/><path d="M393.6 531.3 L401.5 531.3" stroke="#555" stroke-width="1" stroke-dasharray="1.5 1"/><text x="408.6" y="533.3" font-size="5.5" font-weight="bold" fill="#fff" text-anchor="middle" font-family="Liberation Sans">BI</text><circle cx="408.6" cy="557.7" r="6.8" fill="#d6302f"/><path d="M393.6 557.7 L401.5 557.7" stroke="#555" stroke-width="1" stroke-dasharray="1.5 1"/><text x="408.6" y="559.7" font-size="5.5" font-weight="bold" fill="#fff" text-anchor="middle" font-family="Liberation Sans">BI</text><path d="M393.6 425.7 L393.6 564" stroke="#555" stroke-width="1" stroke-dasharray="1.5 1"/><path d="M373.7 422 L377.6 425.4 L373.7 428.8 Z" fill="#2b4784"/><path d="M483.6 423.6 L489.4 423.6 L486.5 427.0 Z" fill="#3a7bd5"/><path d="M493.20 429.40 L498.00 424.60 M498.70 423.90 L500.20 422.40" stroke="#3a7bd5" stroke-width="2.5" stroke-linecap="butt"/><circle cx="500.10" cy="422.50" r="1.25" fill="#3a7bd5"/><circle cx="493.90" cy="428.70" r="1.25" fill="#3a7bd5"/><path d="M1252.5 422 L1255.25 419 L1258 422 Z" fill="#666"/><path d="M1252.5 555 L1255.25 558 L1258 555 Z" fill="#666"/></svg>
<!-- /detail -->
<!-- totals -->
<div class="t" style="right:708px;top:576.4px;font-size:11px;color:#474747;letter-spacing:-0.3px">Total Brut HT</div>
<div class="a" style="left:599.8px;top:573.8px;width:93.0px;height:14.400000000000091px;background:#e0e1e3;border:1px solid #d8d9dc;border-radius:2px"></div>
<div class="t" style="right:623.5px;top:576.4px;font-size:11px;color:#7a7a7a;letter-spacing:0px">419,83</div>
<div class="a" style="left:697px;top:570px;width:1px;height:102px;background:#c9cacf;"></div>
<div class="t" style="right:525.2px;top:578.9px;font-size:11px;color:#474747;letter-spacing:-0.3px">% remise</div>
<div class="a" style="left:783px;top:573.8px;width:93px;height:14.400000000000091px;background:#fff;border:1px solid #d4d5d9;border-radius:2px"></div>
<div class="t" style="right:453.5px;top:576.4px;font-size:11px;color:#333;letter-spacing:0px">0,00</div>
<div class="t" style="right:525.2px;top:604.4px;font-size:11px;color:#474747;letter-spacing:-0.3px">Port HT</div>
<div class="a" style="left:783px;top:601.4px;width:93px;height:13.899999999999977px;background:#fff;border:1px solid #d4d5d9;border-radius:2px"></div>
<div class="t" style="right:440.5px;top:603.7px;font-size:11px;color:#333;letter-spacing:0px">0,00</div>
<div class="t" style="right:525.2px;top:629.9px;font-size:11px;color:#474747;letter-spacing:-0.3px">TVA Port</div>
<div class="a" style="left:783px;top:627px;width:93px;height:13.700000000000045px;background:#fff;border:1px solid #d4d5d9;border-radius:2px"></div>
<div class="t" style="right:453.5px;top:629.2px;font-size:11px;color:#333;letter-spacing:0px">19,60</div>
<div class="t" style="right:525.2px;top:655.4px;font-size:11px;color:#474747;letter-spacing:-0.3px">% Escompte</div>
<div class="a" style="left:783px;top:652px;width:93px;height:14.5px;background:#fff;border:1px solid #d4d5d9;border-radius:2px"></div>
<div class="t" style="right:440.5px;top:654.6px;font-size:11px;color:#333;letter-spacing:0px">0,00</div>
<div class="t" style="right:354.9px;top:578.9px;font-size:11px;color:#474747;letter-spacing:-0.3px">Soit</div>
<div class="a" style="left:953.3px;top:575.7px;width:92.10000000000014px;height:13.799999999999955px;background:#fff;border:1px solid #d4d5d9;border-radius:2px"></div>
<div class="t" style="right:284.5px;top:578.0px;font-size:11px;color:#333;letter-spacing:0px">0,00</div>
<div class="t" style="right:354.9px;top:655.9px;font-size:11px;color:#474747;letter-spacing:-0.3px">Soit</div>
<div class="a" style="left:953.3px;top:651.7px;width:92.10000000000014px;height:14.699999999999932px;background:#e0e1e3;border:1px solid #d8d9dc;border-radius:2px"></div>
<div class="t" style="right:271.5px;top:654.4px;font-size:11px;color:#7a7a7a;letter-spacing:0px">0,00</div>
<div class="a" style="left:1050.5px;top:570px;width:1.0px;height:102px;background:#c9cacf;"></div>
<div class="t" style="right:136.70000000000005px;top:576.9px;font-size:11px;color:#474747;letter-spacing:-0.3px">Total TTC</div>
<div class="a" style="left:1170.7px;top:573.8px;width:92.0px;height:14.400000000000091px;background:#fff;border:1px solid #d4d5d9;border-radius:2px"></div>
<div class="t" style="right:54.5px;top:576.4px;font-size:11px;color:#333;letter-spacing:0px">503,80</div>
<div class="t" style="right:136.70000000000005px;top:602.4px;font-size:11px;color:#474747;letter-spacing:-0.3px">Net à payer</div>
<div class="a" style="left:1170.7px;top:598.9px;width:92.0px;height:14.399999999999977px;background:#e0e1e3;border:1px solid #d8d9dc;border-radius:2px"></div>
<div class="t" style="right:54.5px;top:601.5px;font-size:11px;color:#7a7a7a;letter-spacing:0px">503,80</div>
<div class="a" style="left:357px;top:675px;width:913px;height:2px;background:#d8d9dc;"></div>
<svg width="1303" height="720" style="left:0;top:0" viewBox="0 0 1303 720"><rect x="682.0" y="576.5" width="8" height="9" rx="0.6" fill="#8a8a8a"/><rect x="683.3" y="577.8" width="5.4" height="2" fill="#fff" opacity="0.9"/><g fill="#fff" opacity="0.85"><rect x="683.3" y="581" width="1.4" height="1.2"/><rect x="685.3" y="581" width="1.4" height="1.2"/><rect x="683.3" y="583" width="1.4" height="1.2"/><rect x="685.3" y="583" width="1.4" height="1.2"/><rect x="687.3" y="581" width="1.4" height="3.2"/></g><rect x="853.0" y="576.5" width="8" height="9" rx="0.6" fill="#3a7bd5"/><rect x="854.3" y="577.8" width="5.4" height="2" fill="#fff" opacity="0.9"/><g fill="#fff" opacity="0.85"><rect x="854.3" y="581" width="1.4" height="1.2"/><rect x="856.3" y="581" width="1.4" height="1.2"/><rect x="854.3" y="583" width="1.4" height="1.2"/><rect x="856.3" y="583" width="1.4" height="1.2"/><rect x="858.3" y="581" width="1.4" height="3.2"/></g><path d="M865.5 581 L872.5 581 M869 577.5 L869 584.5" stroke="#333" stroke-width="1.6"/><rect x="866.0" y="603.8" width="8" height="9" rx="0.6" fill="#3a7bd5"/><rect x="867.3" y="605.0999999999999" width="5.4" height="2" fill="#fff" opacity="0.9"/><g fill="#fff" opacity="0.85"><rect x="867.3" y="608.3" width="1.4" height="1.2"/><rect x="869.3" y="608.3" width="1.4" height="1.2"/><rect x="867.3" y="610.3" width="1.4" height="1.2"/><rect x="869.3" y="610.3" width="1.4" height="1.2"/><rect x="871.3" y="608.3" width="1.4" height="3.2"/></g><path d="M855.6 631.5999999999999 L861.4 631.5999999999999 L858.5 635.0 Z" fill="#3a7bd5"/><path d="M866.20 637.60 L871.00 632.80 M871.70 632.10 L873.20 630.60" stroke="#3a7bd5" stroke-width="2.5" stroke-linecap="butt"/><circle cx="873.10" cy="630.70" r="1.25" fill="#3a7bd5"/><circle cx="866.90" cy="636.90" r="1.25" fill="#3a7bd5"/><rect x="866.0" y="654.8" width="8" height="9" rx="0.6" fill="#3a7bd5"/><rect x="867.3" y="656.0999999999999" width="5.4" height="2" fill="#fff" opacity="0.9"/><g fill="#fff" opacity="0.85"><rect x="867.3" y="659.3" width="1.4" height="1.2"/><rect x="869.3" y="659.3" width="1.4" height="1.2"/><rect x="867.3" y="661.3" width="1.4" height="1.2"/><rect x="869.3" y="661.3" width="1.4" height="1.2"/><rect x="871.3" y="659.3" width="1.4" height="3.2"/></g><rect x="1022.0" y="578.0" width="8" height="9" rx="0.6" fill="#3a7bd5"/><rect x="1023.3" y="579.3" width="5.4" height="2" fill="#fff" opacity="0.9"/><g fill="#fff" opacity="0.85"><rect x="1023.3" y="582.5" width="1.4" height="1.2"/><rect x="1025.3" y="582.5" width="1.4" height="1.2"/><rect x="1023.3" y="584.5" width="1.4" height="1.2"/><rect x="1025.3" y="584.5" width="1.4" height="1.2"/><rect x="1027.3" y="582.5" width="1.4" height="3.2"/></g><path d="M1035.5 582.5 L1042.5 582.5 M1039 579.0 L1039 586.0" stroke="#333" stroke-width="1.6"/><rect x="1035.0" y="654.5" width="8" height="9" rx="0.6" fill="#8a8a8a"/><rect x="1036.3" y="655.8" width="5.4" height="2" fill="#fff" opacity="0.9"/><g fill="#fff" opacity="0.85"><rect x="1036.3" y="659" width="1.4" height="1.2"/><rect x="1038.3" y="659" width="1.4" height="1.2"/><rect x="1036.3" y="661" width="1.4" height="1.2"/><rect x="1038.3" y="661" width="1.4" height="1.2"/><rect x="1040.3" y="659" width="1.4" height="3.2"/></g><rect x="1252.0" y="576.5" width="8" height="9" rx="0.6" fill="#3a7bd5"/><rect x="1253.3" y="577.8" width="5.4" height="2" fill="#fff" opacity="0.9"/><g fill="#fff" opacity="0.85"><rect x="1253.3" y="581" width="1.4" height="1.2"/><rect x="1255.3" y="581" width="1.4" height="1.2"/><rect x="1253.3" y="583" width="1.4" height="1.2"/><rect x="1255.3" y="583" width="1.4" height="1.2"/><rect x="1257.3" y="581" width="1.4" height="3.2"/></g><rect x="1252.0" y="601.5" width="8" height="9" rx="0.6" fill="#8a8a8a"/><rect x="1253.3" y="602.8" width="5.4" height="2" fill="#fff" opacity="0.9"/><g fill="#fff" opacity="0.85"><rect x="1253.3" y="606" width="1.4" height="1.2"/><rect x="1255.3" y="606" width="1.4" height="1.2"/><rect x="1253.3" y="608" width="1.4" height="1.2"/><rect x="1255.3" y="608" width="1.4" height="1.2"/><rect x="1257.3" y="606" width="1.4" height="3.2"/></g></svg>
<!-- /totals -->
<!-- taskbar -->
<div class="a" style="left:0;top:680px;width:1303px;height:40px;background:#3e3e40"></div>
<div class="a" style="left:243px;top:680px;width:1060px;height:6px;background:linear-gradient(180deg,#342e2c,#3e3e40)"></div>
<div class="a" style="left:0;top:680px;width:243px;height:40px;background:linear-gradient(90deg,#2f2b2a,#383333 60%,#3a3636)"></div>
<div class="t" style="left:1246px;top:686px;font-size:11.5px;color:#fff;letter-spacing:-0.3px">15:30</div>
<div class="t" style="left:1231px;top:703.5px;font-size:11.5px;color:#fff;letter-spacing:0.05px">10/03/2020</div>
<svg width="1303" height="720" style="left:0;top:0" viewBox="0 0 1303 720">
<g fill="#fff"><path d="M15 693.8 L22.3 692.8 L22.3 699.3 L15 699.3 Z"/><path d="M23.3 692.6 L31.1 691.5 L31.1 699.3 L23.3 699.3 Z"/><path d="M15 700.3 L22.3 700.3 L22.3 706.8 L15 705.8 Z"/><path d="M23.3 700.3 L31.1 700.3 L31.1 708 L23.3 706.9 Z"/></g>
<circle cx="72.2" cy="697" r="5.3" fill="none" stroke="#fff" stroke-width="1.3"/>
<path d="M68.5 700.8 L63.5 707.5" stroke="#fff" stroke-width="1.5"/>
<circle cx="119" cy="700" r="6.6" fill="none" stroke="#fff" stroke-width="1.9"/>
<g fill="none" stroke="#fff" stroke-width="1.1"><path d="M159.8 692 L159.8 694.6 L169.3 694.6 L169.3 692 M159.8 707 L159.8 704.2 L169.3 704.2 L169.3 707"/><rect x="159.8" y="696.9" width="9.5" height="5.4"/><path d="M173.5 692 L173.5 695.5 M173.5 700 L173.5 707"/></g><rect x="172.1" y="696.6" width="2.8" height="2.6" fill="#fff"/>
<path d="M228.5 702.6 L214.9 702.6 Q215.6 707 221.2 707.2 Q225.2 707.2 227.9 705.2 L227.9 709.4 Q224.6 710.9 220.2 710.9 Q212 710.6 210.3 703.3 Q209.3 697 213.3 692.8 Q216.8 689.5 221.2 689.5 Q228.6 690 228.6 699.2 Z M214.9 699.4 L223.9 699.4 Q223.6 694.5 219.6 694.3 Q215.6 694.5 214.9 699.4 Z" fill="#0b7ad8" fill-rule="evenodd"/>
<path d="M208 700 Q209.5 692.5 216.5 690.8 Q211.5 694.5 209.8 699.5 Z" fill="#0b7ad8"/>
<path d="M1103 702.5 L1108.2 697.5 L1113.4 702.5" fill="none" stroke="#fff" stroke-width="1.2"/>
<g fill="none" stroke="#fff" stroke-width="1.1"><rect x="1127" y="696.5" width="12" height="7"/><path d="M1139.5 698.5 L1139.5 701.5 M1123.5 696 L1123.5 699 M1126 696 L1126 699 M1122.5 699 L1127 699 L1127 701 M1124.7 701 L1124.7 704"/></g>
<rect x="1128" y="697.5" width="5" height="5" fill="#fff"/>
<g fill="none" stroke="#fff" stroke-width="1.1"><path d="M1148.5 697.5 L1151.5 697.5 L1155 694.5 L1155 705.5 L1151.5 702.5 L1148.5 702.5 Z"/><path d="M1157.5 697.8 L1161.5 701.8 M1161.5 697.8 L1157.5 701.8"/></g>
<g fill="none" stroke="#fff" stroke-width="1.1"><rect x="1175.5" y="694.5" width="12.5" height="9"/><path d="M1181.7 703.5 L1181.7 706.5 M1177.5 706.5 L1186 706.5"/><rect x="1172" y="694" width="3.5" height="3.5"/><path d="M1173.7 697.5 L1173.7 707"/></g>
<g fill="none" stroke="#fff" stroke-width="1.1"><path d="M1203 705.5 L1213.5 694 Q1215.5 692.5 1216 694.5 L1205.5 706 L1202.5 707.5 Z"/><path d="M1200.5 707 Q1199.5 702 1204 700.5 M1209 699.5 Q1214 700 1212.5 704"/></g>
</svg>
</body></html>
